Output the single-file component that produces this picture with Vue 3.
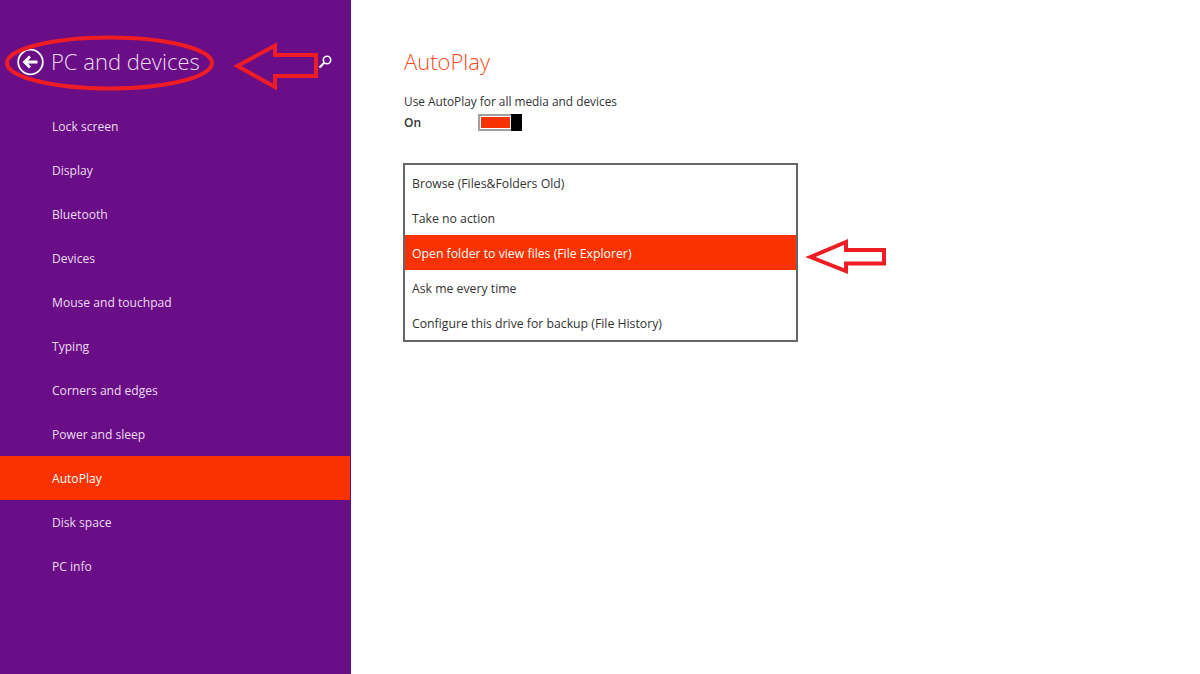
<template>
  <div class="page">
    <aside class="sidebar">
      <header class="side-head">
        <svg class="back" width="28" height="28" viewBox="0 0 28 28">
          <circle cx="13.500" cy="14" r="12.300" fill="none" stroke="#fff" stroke-width="1.800" />
          <path d="M20.500 14H8M13 8.500 7.500 14l5.500 5.500" fill="none" stroke="#fff" stroke-width="2.800" />
        </svg>
        <h1>PC and devices</h1>
        <svg class="search" width="16" height="16" viewBox="0 0 16 16">
          <circle cx="10" cy="6" r="3.700" fill="none" stroke="#fff" stroke-width="1.600" />
          <path d="M7.300 8.700 2.500 13.500" fill="none" stroke="#fff" stroke-width="2" />
        </svg>
      </header>
      <nav>
        <a v-for="item in navItems" :key="item" class="nav-item" :class="{ active: item === 'AutoPlay' }">{{ item }}</a>
      </nav>
    </aside>

    <main class="content">
      <h2>AutoPlay</h2>
      <p class="label">Use AutoPlay for all media and devices</p>
      <div class="toggle-row">
        <span class="state">On</span>
        <span class="toggle"><span class="fill"></span><span class="thumb"></span></span>
      </div>
      <ul class="options">
        <li v-for="opt in options" :key="opt" :class="{ selected: opt.startsWith('Open') }">{{ opt }}</li>
      </ul>
    </main>

    <!-- red markup drawn on top of the screenshot -->
    <svg class="markup" width="1200" height="674" viewBox="0 0 1200 674">
      <ellipse cx="109.500" cy="63" rx="102.500" ry="25.500" />
      <path d="M237.500 66 275 45.500V55H316V76H275V87Z" />
      <path d="M810.500 257 846 242V250H884V263.500H846V271Z" />
    </svg>
  </div>
</template>

<script setup>
const navItems = [
  'Lock screen',
  'Display',
  'Bluetooth',
  'Devices',
  'Mouse and touchpad',
  'Typing',
  'Corners and edges',
  'Power and sleep',
  'AutoPlay',
  'Disk space',
  'PC info'
];

const options = [
  'Browse (Files&Folders Old)',
  'Take no action',
  'Open folder to view files (File Explorer)',
  'Ask me every time',
  'Configure this drive for backup (File History)'
];
</script>

<style>
html, body {
  margin: 0;
  background: #fff;
}
</style>

<style scoped>
.page {
  position: relative;
  display: flex;
  width: 1200px;
  height: 674px;
  overflow: hidden;
  font-family: "Open Sans", "Noto Sans", sans-serif;
  background: #fff;
}
.sidebar {
  width: 351px;
  flex-shrink: 0;
  background: #6a0e87;
  color: #eadcf0;
}
.side-head {
  display: flex;
  align-items: center;
  height: 104px;
  padding: 20px 18px 0 17px;
  box-sizing: border-box;
}
.back {
  flex-shrink: 0;
}
.side-head h1 {
  margin: 0 0 2px 6px;
  flex: 1;
  font-size: 22px;
  font-weight: 300;
  line-height: 1;
}
.search {
  flex-shrink: 0;
}
.nav-item {
  display: block;
  width: 350px;
  height: 44px;
  line-height: 46px;
  padding-left: 52px;
  box-sizing: border-box;
  font-size: 12.100px;
}
.nav-item.active {
  background: #f93200;
  color: #fff;
}
.content {
  padding: 45px 0 0 404px;
  margin-left: -351px;
  color: #333;
}
.content h2 {
  margin: 0;
  font-size: 22px;
  font-weight: 300;
  line-height: 32px;
  color: #fa4a1c;
}
.label {
  margin: 15px 0 0;
  font-size: 11.850px;
  line-height: 18px;
}
.toggle-row {
  display: flex;
  align-items: center;
  height: 17px;
  margin-top: 4px;
}
.state {
  width: 74px;
  font-size: 12px;
  font-weight: 600;
}
.toggle {
  display: flex;
  width: 44px;
  height: 17px;
  box-sizing: border-box;
  border: 2px solid #a0a0a0;
  border-right: 0;
}
.fill {
  flex: 1;
  background: #f83200;
  border: 1px solid #fff;
}
.thumb {
  width: 11px;
  margin: -2px 0;
  background: #000;
}
.options {
  list-style: none;
  margin: 32px 0 0 -1px;
  padding: 0;
  width: 395px;
  height: 179px;
  box-sizing: border-box;
  border: 2px solid #666;
}
.options li {
  height: 35px;
  line-height: 37px;
  padding-left: 7px;
  font-size: 12.250px;
}
.options li.selected {
  background: #f93200;
  color: #fff;
}
.markup {
  position: absolute;
  left: 0;
  top: 0;
  pointer-events: none;
}
.markup ellipse,
.markup path {
  fill: none;
  stroke: #ee1c25;
  stroke-width: 4;
}
</style>
